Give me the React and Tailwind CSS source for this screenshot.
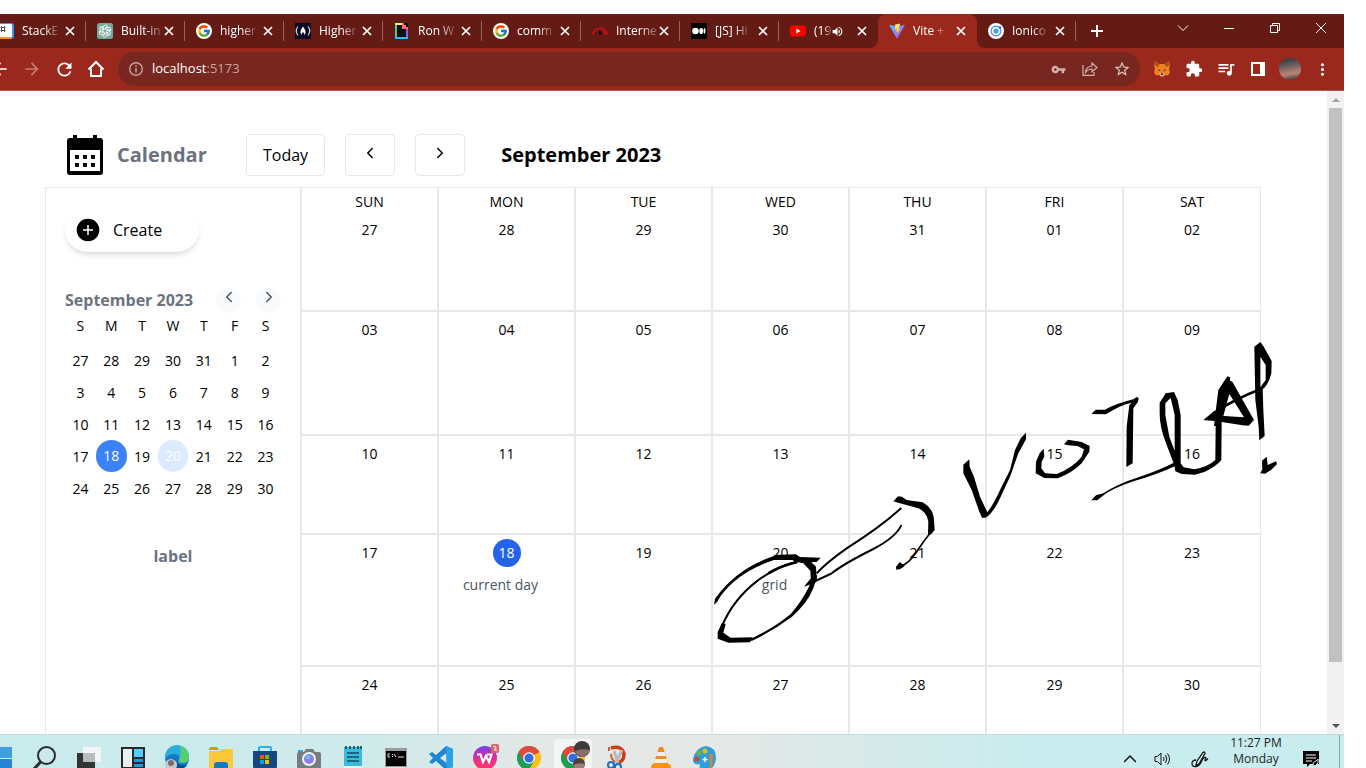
import React from "react";
import { FcGoogle } from "react-icons/fc";
import {
  MdArrowBack,
  MdArrowForward,
  MdRefresh,
  MdExtension,
  MdVpnKey,
  MdStarBorder,
  MdMoreVert,
  MdQueueMusic,
  MdVolumeUp,
} from "react-icons/md";
import { ChevronLeft, ChevronRight } from "lucide-react";

/* ---------- favicons ---------- */

const StackEditIcon = () => (
  <svg width="16" height="16" viewBox="0 0 16 16">
    <rect width="16" height="16" rx="3" fill="#2f9bef" />
    <path d="M0 13h14l-1 3H3q-3 0-3-3z" fill="#f7941d" />
    <rect x="0" y="1" width="14" height="13" rx="1" fill="#fff" />
    <path d="M3.500 3v6M6.500 3v6M2.500 4.500h5M2.500 7.500h5" stroke="#555" />
  </svg>
);

const OpenAiIcon = () => (
  <svg width="16" height="16" viewBox="0 0 16 16">
    <rect width="16" height="16" rx="2.500" fill="#74aa9c" />
    <g fill="none" stroke="#fff" strokeWidth=".9">
      {[0, 60, 120, 180, 240, 300].map((a) => (
        <path key={a} transform={`rotate(${a} 8 8)`} d="M6.200 7V4.200a2.300 2.300 0 0 1 4.300-1L8 4.900v2" />
      ))}
    </g>
  </svg>
);

const GoogleIcon = () => (
  <span className="flex size-4 items-center justify-center rounded-full bg-white">
    <FcGoogle size={14} />
  </span>
);

const CampIcon = () => (
  <svg width="16" height="16" viewBox="0 0 16 16">
    <rect width="16" height="16" fill="#0a0a23" />
    <path d="M3 3.500Q-.5 8 3 12.500M13 3.500Q16.500 8 13 12.500" fill="none" stroke="#d8d8e0" strokeWidth="1.200" />
    <path d="M8 3.500q3 4 2.500 6.500l-1.500 2q.5-2-1-3-1.500 1-1 3L5.500 10Q5 7 8 3.500z" fill="#fff" />
  </svg>
);

const GiphyIcon = () => (
  <svg width="16" height="16" viewBox="0 0 16 16">
    <rect x="1" width="13" height="16" fill="#111" />
    <path d="M1 0h2v14H1z" fill="#4fc98a" />
    <path d="M1 0h7v2H1z" fill="#fff68f" />
    <path d="M1 14h13v2H1z" fill="#1fc3ff" />
    <path d="M12 6h2v8h-2z" fill="#8b5cf6" />
    <path d="M8 0h2v2h2v2h2v2H8z" fill="#ff6f6f" />
  </svg>
);

const GaugeIcon = () => (
  <svg width="16" height="16" viewBox="0 0 16 16" fill="none">
    <path d="M.8 11.500a7.300 7.300 0 0 1 14.400 0" stroke="#d0151c" strokeWidth="1.500" />
    <path d="M8 4.500a7 7 0 0 1 5 7" stroke="#c01016" strokeWidth="2" />
    <path d="M7 12l.5-5.500L10 11z" fill="#180506" />
  </svg>
);

const MediumIcon = () => (
  <svg width="16" height="16" viewBox="0 0 16 16">
    <rect width="16" height="16" rx="1" fill="#000" />
    <circle cx="4.500" cy="8" r="3.300" fill="#fff" />
    <ellipse cx="10.200" cy="8" rx="1.900" ry="3.100" fill="#fff" />
    <ellipse cx="13.500" cy="8" rx="1" ry="2.900" fill="#fff" />
  </svg>
);

const YouTubeIcon = () => (
  <svg width="16" height="16" viewBox="0 0 16 16">
    <rect y="2.500" width="16" height="11" rx="3" fill="#f00" />
    <path d="M6.300 5.600v4.800L10.600 8z" fill="#fff" />
  </svg>
);

const ViteIcon = () => (
  <svg width="16" height="16" viewBox="0 0 32 32">
    <defs>
      <linearGradient id="viteA" x1="0" y1="0" x2="1" y2="1">
        <stop stopColor="#41d1ff" />
        <stop offset="1" stopColor="#bd34fe" />
      </linearGradient>
      <linearGradient id="viteB" x1="0" y1="0" x2="0" y2="1">
        <stop stopColor="#ffea83" />
        <stop offset="1" stopColor="#ffa800" />
      </linearGradient>
    </defs>
    <path d="M31 5.500 17 30.600q-.8 1.200-1.700 0L1 5.500Q.6 4 2.200 4.200L16 6.700l13.800-2.500q1.700-.1 1.200 1.300z" fill="url(#viteA)" />
    <path d="M22.500 1 12.200 3l-.7 10.700 3.600-.7-1 5.300 3-.9-1.200 7.200 7.200-13.800-3.800.7z" fill="url(#viteB)" />
  </svg>
);

const IonicIcon = () => (
  <svg width="16" height="16" viewBox="0 0 16 16">
    <circle cx="8" cy="8" r="8" fill="#fff" />
    <circle cx="8" cy="8" r="4.900" fill="none" stroke="#3880ff" strokeWidth="1.100" />
    <circle cx="8" cy="8" r="2.600" fill="#3fa0f5" />
    <circle cx="12" cy="4.500" r="1.200" fill="#1f5fe0" />
  </svg>
);

/* ---------- browser chrome ---------- */

const leftTabs = [
  { title: "Built-in", Icon: OpenAiIcon },
  { title: "higher", Icon: GoogleIcon },
  { title: "Higher", Icon: CampIcon },
  { title: "Ron W", Icon: GiphyIcon },
  { title: "comm", Icon: GoogleIcon },
  { title: "Interne", Icon: GaugeIcon },
  { title: "[JS] Hi", Icon: MediumIcon },
  { title: "(19", Icon: YouTubeIcon, audio: true },
];

function CloseGlyph() {
  return (
    <svg width="10" height="10" viewBox="0 0 10 10">
      <path d="M1 1l8 8M9 1L1 9" stroke="#fff" strokeWidth="1.700" />
    </svg>
  );
}

function Tab({ title, Icon, audio, separator = true }) {
  return (
    <div className="flex h-[34px] w-[99px] shrink-0 items-center pl-[11px] text-white">
      <span className="shrink-0">
        <Icon />
      </span>
      <button type="button" className="ml-2 min-w-0 flex-1 text-left text-xs whitespace-nowrap">
        <span className="inline-block [mask-image:linear-gradient(to_right,#000_60%,transparent_110%)]">{title}</span>
      </button>
      {audio && <MdVolumeUp size={13} className="mr-[10px] shrink-0" />}
      <button type="button" aria-label="Close tab" className="flex size-4 shrink-0 items-center justify-center">
        <CloseGlyph />
      </button>
      <span className={separator ? "ml-[7px] h-5 w-px shrink-0 bg-[#9a605b]" : "ml-[7px] w-px shrink-0"} />
    </div>
  );
}

function WindowButton({ label, children }) {
  return (
    <button type="button" aria-label={label} className="flex h-7 w-[46px] items-center justify-center">
      <svg width="12" height="12" viewBox="0 0 12 12" fill="none" stroke="#fff">
        {children}
      </svg>
    </button>
  );
}

function TabStrip() {
  return (
    <div className="flex h-[34px] bg-[#9b281d]">
      <div className="flex shrink-0 rounded-br-lg bg-[#631b14]">
        <div className="flex w-[86px] justify-end overflow-hidden">
          <Tab title="StackE" Icon={StackEditIcon} />
        </div>
        {leftTabs.map((t, i) => (
          <Tab key={t.title} {...t} separator={i < leftTabs.length - 1} />
        ))}
      </div>
      <div className="shrink-0 bg-[#631b14]">
        <div className="rounded-t-lg bg-[#9b281d]">
          <Tab title="Vite +" Icon={ViteIcon} separator={false} />
        </div>
      </div>
      <div className="flex flex-1 rounded-bl-lg bg-[#631b14]">
        <Tab title="Ionico" Icon={IonicIcon} />
        <button type="button" aria-label="New tab" className="ml-[9px] flex w-6 items-center justify-center">
          <svg width="12" height="12" viewBox="0 0 12 12">
            <path d="M6 0v12M0 6h12" stroke="#fff" strokeWidth="2" />
          </svg>
        </button>
        <div className="ml-auto flex">
          <WindowButton label="Search tabs">
            <path d="M1 3.500l5 5 5-5" />
          </WindowButton>
          <WindowButton label="Minimize">
            <path d="M1 6.500h10" />
          </WindowButton>
          <WindowButton label="Restore">
            <path d="M1.500 3.500h7v7h-7zM3.500 3V1.500h7v7H9" />
          </WindowButton>
          <WindowButton label="Close">
            <path d="M1 1l10 10M11 1L1 11" />
          </WindowButton>
        </div>
      </div>
    </div>
  );
}

function ToolButton({ label, children }) {
  return (
    <button type="button" aria-label={label} className="flex h-8 w-8 shrink-0 items-center justify-center">
      {children}
    </button>
  );
}

function Toolbar() {
  return (
    <div className="flex h-[43px] items-center border-b border-[#b5554c] bg-[#9b281d] pr-[6px] text-white">
      <div className="flex w-4 justify-end overflow-hidden">
        <ToolButton label="Back">
          <MdArrowBack size={20} className="shrink-0" />
        </ToolButton>
      </div>
      <ToolButton label="Forward">
        <MdArrowForward size={20} className="text-[#c67b74]" />
      </ToolButton>
      <ToolButton label="Reload">
        <MdRefresh size={21} />
      </ToolButton>
      <ToolButton label="Home">
        <svg width="18" height="18" viewBox="0 0 18 18" fill="none">
          <path d="M1.500 9.500L9 2l7.500 7.500M4 8.500V16h10V8.500" stroke="#fff" strokeWidth="2" />
        </svg>
      </ToolButton>
      <div className="mx-[6px] flex h-[34px] min-w-0 flex-1 items-center rounded-full bg-[#77271f] pr-[2px] pl-[10px]">
        <svg width="16" height="16" viewBox="0 0 16 16" fill="none">
          <circle cx="8" cy="8" r="6.300" stroke="#c5a5a2" strokeWidth="1.400" />
          <path d="M8 7v4.500M8 4.300v1.500" stroke="#c5a5a2" strokeWidth="1.500" />
        </svg>
        <button type="button" aria-label="Address" className="ml-2 flex-1 text-left text-[13px]">
          localhost<span className="text-[#c5a29f]">:5173</span>
        </button>
        <ToolButton label="Passwords">
          <MdVpnKey size={15} className="text-[#d0b2af]" />
        </ToolButton>
        <ToolButton label="Share">
          <svg width="16" height="16" viewBox="0 0 16 16" fill="none" stroke="#d0b2af" strokeWidth="1.200">
            <path d="M1 4v10.400h11V11" />
            <path d="M3.500 11.500Q4 5.500 10 5V2l5 4.500-5 4.200V8Q6 8 3.500 11.500z" />
          </svg>
        </ToolButton>
        <ToolButton label="Bookmark">
          <MdStarBorder size={18} className="text-[#dcc4c2]" />
        </ToolButton>
      </div>
      <ToolButton label="Wallet">
        <svg width="16" height="16" viewBox="0 0 16 16">
          <path d="M1 0l4.500 3h5L15 0l1 4-1 4 1 3.500-2 3-3-.5-1.500 1.500h-3L5 14l-3 .5-2-3L1 8 0 4z" fill="#f0811f" />
          <path d="M1 0l4.500 3L4 6 0 4zM15 0l-4.500 3L12 6l4-2z" fill="#a3541a" />
          <path d="M4 8l3 1.500-2 .8zM12 8L9 9.500l2 .8z" fill="#3a3f46" />
          <path d="M5 12.500h6L9.500 15h-3z" fill="#d5bfb2" />
          <path d="M6.800 12.500h2.400l-.4 1.500H7.200z" fill="#161616" />
        </svg>
      </ToolButton>
      <ToolButton label="Extensions">
        <MdExtension size={18} />
      </ToolButton>
      <ToolButton label="Media">
        <MdQueueMusic size={20} />
      </ToolButton>
      <ToolButton label="Side panel">
        <svg width="14" height="14" viewBox="0 0 14 14">
          <path fillRule="evenodd" d="M0 0h14v14H0zM2 2v10h7V2z" fill="#fff" />
        </svg>
      </ToolButton>
      <ToolButton label="Profile">
        <span className="size-[22px] rounded-full bg-[linear-gradient(170deg,#3a3d42_10%,#6b5f60_38%,#a3786d_58%,#b98476_70%,#54403e_92%)]" />
      </ToolButton>
      <ToolButton label="Menu">
        <MdMoreVert size={19} />
      </ToolButton>
    </div>
  );
}

/* ---------- calendar page ---------- */

function CalendarLogo() {
  return (
    <svg width="40" height="40" viewBox="0 0 40 40">
      <path d="M8 0h4v3h16V0h4v3h3q3 0 3 3v31q0 3-3 3H5q-3 0-3-3V6q0-3 3-3h3z" />
      <path d="M5 15h30v21H5z" fill="#fff" />
      <path d="M10 20h4v4h-4zM18 20h4v4h-4zM26 20h4v4h-4zM10 28h4v4h-4zM18 28h4v4h-4zM26 28h4v4h-4z" />
    </svg>
  );
}

function PageHeader() {
  return (
    <header className="flex h-24 items-center gap-5 pt-8 pl-5">
      <div className="flex w-[161px] items-center gap-3">
        <CalendarLogo />
        <h1 className="text-xl font-bold text-[#6b7280]">Calendar</h1>
      </div>
      <button type="button" className="h-[42px] rounded border border-gray-200 px-4 text-base">
        Today
      </button>
      <button
        type="button"
        aria-label="Previous month"
        className="flex h-[42px] w-[50px] items-center justify-center rounded border border-gray-200 pb-1"
      >
        <ChevronLeft size={18} />
      </button>
      <button
        type="button"
        aria-label="Next month"
        className="flex h-[42px] w-[50px] items-center justify-center rounded border border-gray-200 pb-1"
      >
        <ChevronRight size={18} />
      </button>
      <h2 className="ml-4 text-xl font-bold">September 2023</h2>
    </header>
  );
}

const miniWeeks = [
  [27, 28, 29, 30, 31, 1, 2],
  [3, 4, 5, 6, 7, 8, 9],
  [10, 11, 12, 13, 14, 15, 16],
  [17, 18, 19, 20, 21, 22, 23],
  [24, 25, 26, 27, 28, 29, 30],
];

function MiniDay({ week, day }) {
  if (week === 3 && day === 18) {
    return <button type="button" className="block h-8 w-full rounded-full bg-[#3b82f6] text-white">{day}</button>;
  }
  if (week === 3 && day === 20) {
    return <button type="button" className="block h-8 w-full rounded-full bg-[#dbeafe] text-white">{day}</button>;
  }
  return <button type="button" className="block h-8 w-full pt-[2px]">{day}</button>;
}

function Sidebar() {
  return (
    <aside className="w-64 shrink-0 border-x border-gray-200 px-[19px] pt-5">
      <button type="button" className="flex h-11 w-[134px] items-center gap-3 rounded-full pl-[10px] text-base shadow-md">
        <svg width="26" height="26" viewBox="0 0 26 26">
          <circle cx="13" cy="13" r="11.300" />
          <path d="M13 8v10M8 13h10" stroke="#fff" strokeWidth="1.500" />
        </svg>
        Create
      </button>
      <div className="mt-9 flex h-6 items-center">
        <h3 className="text-base font-bold text-[#6b7280]">September 2023</h3>
        <button
          type="button"
          aria-label="Previous"
          className="ml-auto flex size-[25px] items-center justify-center rounded-full bg-gray-50 pb-[6px] text-gray-600"
        >
          <ChevronLeft size={18} />
        </button>
        <button
          type="button"
          aria-label="Next"
          className="ml-[15px] flex size-[25px] items-center justify-center rounded-full bg-gray-50 pb-[6px] text-gray-600"
        >
          <ChevronRight size={18} />
        </button>
      </div>
      <table className="w-full table-fixed border-collapse text-center text-sm">
        <thead>
          <tr className="h-8 align-top">
            {["S", "M", "T", "W", "T", "F", "S"].map((d, i) => (
              <th key={i} className="pt-1 font-normal">{d}</th>
            ))}
          </tr>
        </thead>
        <tbody>
          {miniWeeks.map((w, wi) => (
            <tr key={wi}>
              {w.map((d) => (
                <td key={d} className="p-0">
                  <MiniDay week={wi} day={d} />
                </td>
              ))}
            </tr>
          ))}
        </tbody>
      </table>
      <p className="mt-10 text-center text-base font-bold text-[#6b7280]">label</p>
    </aside>
  );
}

const monthWeeks = [
  { height: "h-[98px]", days: ["27", "28", "29", "30", "31", "01", "02"] },
  { height: "h-[124px]", days: ["03", "04", "05", "06", "07", "08", "09"] },
  { height: "h-[99px]", days: ["10", "11", "12", "13", "14", "15", "16"] },
  { height: "h-[132px]", days: ["17", "18", "19", "20", "21", "22", "23"] },
  { height: "h-[124px]", days: ["24", "25", "26", "27", "28", "29", "30"] },
];

const events = { "3-18": "current day", "3-20": "grid" };

function MonthGrid() {
  return (
    <table className="w-full table-fixed border-separate border-spacing-0 border-l border-gray-200 text-center text-sm">
      <thead>
        <tr>
          {["SUN", "MON", "TUE", "WED", "THU", "FRI", "SAT"].map((d) => (
            <th key={d} className="border-r-2 border-gray-200 p-0 pt-1 font-normal last:border-r">{d}</th>
          ))}
        </tr>
      </thead>
      <tbody>
        {monthWeeks.map((w, wi) => (
          <tr key={wi} className={`${w.height} align-top`}>
            {w.days.map((d) => (
              <td
                key={d}
                className={
                  wi > 0
                    ? "border-t-2 border-r-2 border-gray-200 p-0 pt-1 last:border-r"
                    : "border-r-2 border-gray-200 p-0 pt-1 last:border-r"
                }
              >
                {wi === 3 && d === "18" ? (
                  <span className="mx-auto flex size-7 items-center justify-center rounded-full bg-[#2563eb] text-white">
                    {d}
                  </span>
                ) : (
                  <span className="flex h-7 items-center justify-center">{d}</span>
                )}
                {events[`${wi}-${d}`] && (
                  <p className="mt-2 mr-3 text-gray-600">{events[`${wi}-${d}`]}</p>
                )}
              </td>
            ))}
          </tr>
        ))}
      </tbody>
    </table>
  );
}

/* Freehand ink annotation over the calendar */
function Ink() {
  return (
    <svg
      className="pointer-events-none absolute top-[239px] left-[700px]"
      width="600"
      height="330"
      viewBox="0 0 1800 990"
      fill="#000"
      stroke="none"
    >
      <path d="M42 824L45 806Q110 715 222 678V690Q115 725 62 798L52 815z" />
      <path d="M222 675L287 673L300 681L362 683L350 696L306 697L275 690H222z" />
      <path d="M285 680L325 688L348 710L350 745L340 775Q322 820 276 860Q215 905 155 933L150 928Q225 892 272 852Q305 815 326 772L333 755L331 722L310 700L280 694z" />
      <path d="M150 937L85 938L53 926V906L66 878L77 882L70 908L92 923L158 922z" />
      <path d="M66 888Q100 808 170 754Q225 712 290 695" fill="none" stroke="#000" strokeWidth="6" />
      <path d="M205 730Q240 708 292 696" fill="none" stroke="#000" strokeWidth="8" />
      <path d="M312 770L335 742L352 735L348 757z" />
      <g fill="none" stroke="#000" strokeWidth="6">
        <path d="M350 730Q380 697 440 655Q540 592 604 534" />
        <path d="M346 753L395 730Q430 702 520 657Q590 620 604 585" />
        <path d="M690 610Q668 638 650 665Q625 703 600 709" strokeWidth="5" />
      </g>
      <path d="M580 514L594 499L606 500L620 510L668 517Q700 535 702 570L704 600L692 614L684 612L685 575Q680 545 655 535L600 520z" />
      <path d="M588 710L600 696L614 708L600 718L589 719z" />
      <path d="M790 404L808 388L809 410L822 440L840 500L865 553L858 563H846L838 545L815 480L790 430z" />
      <path d="M962 325L978 308V328L955 370L930 440L900 505Q885 540 862 560L858 552Q880 525 900 480L930 420L945 360z" />
      <g transform="translate(900 0)">
        <path d="M131 356L119 370L108 395L107 430L133 444L173 445Q215 430 245 400L268 365L269 348L245 336L204 329L192 343L205 346L232 348L252 358L245 380Q220 412 170 432L135 430L124 415L125 395L133 380z" />
        <path d="M274 252L287 239H315Q350 220 400 208L410 201L416 204L414 215L400 235L398 400L379 411L380 290L388 225L395 218Q360 225 318 253z" />
        <path
          fillRule="evenodd"
          d="M497 190L522 186L533 210L542 255V400L551 412L583 418Q625 410 646 390L647 288H642L650 220L655 180L682 139L690 142V152L697 155L762 270L746 287L728 286L665 276L664 390Q650 408 615 425L585 434L545 432L526 424L523 405L500 345Q478 290 479 250V218zM496 220L512 203L524 255V362L508 320L496 255zM670 258L688 192L732 262z"
        />
        <path d="M610 270L642 244L660 258L745 266V281L665 275z" />
        <path d="M640 250Q700 208 785 176" fill="none" stroke="#000" strokeWidth="8" />
        <path
          fillRule="evenodd"
          d="M763 50L781 36L790 48L815 93L814 130Q805 165 788 178L790 240L794 318L778 331L776 290L766 210zM781 80L797 105V150L781 172z"
        />
        <path d="M526 408Q470 434 400 454Q330 478 305 500L292 511H274L288 496L310 490Q350 462 420 440Q480 420 526 396z" />
        <path d="M786 392L800 380L803 405L828 394L831 402L813 420L795 431L781 430L787 418z" />
      </g>
    </svg>
  );
}

function Scrollbar() {
  return (
    <div className="flex w-[17px] shrink-0 flex-col bg-[#f1f1f1]">
      <button type="button" aria-label="Scroll up" className="flex h-[17px] items-center justify-center">
        <svg width="8" height="4" viewBox="0 0 8 4"><path d="M0 4l4-4 4 4z" fill="#a3a3a3" /></svg>
      </button>
      <div className="min-h-0 flex-1 px-[2px]">
        <div className="h-[91%] bg-[#c1c1c1]" />
      </div>
      <button type="button" aria-label="Scroll down" className="flex h-[17px] items-center justify-center">
        <svg width="8" height="4" viewBox="0 0 8 4"><path d="M0 0l4 4 4-4z" fill="#505050" /></svg>
      </button>
    </div>
  );
}

/* ---------- taskbar ---------- */

const ChromeLogo = () => (
  <>
    <circle cx="12" cy="12" r="12" fill="#fbc116" />
    <path d="M12 12L1.600 6A12 12 0 0 1 22.400 6z" fill="#dd4b3e" />
    <path d="M12 12L1.600 6A12 12 0 0 0 12 24l5-9z" fill="#1e9d57" />
    <path d="M12 6h10.400A12 12 0 0 0 1.600 6L7 15z" fill="#dd4b3e" />
    <circle cx="12" cy="12" r="5.800" fill="#fff" />
    <circle cx="12" cy="12" r="4.600" fill="#2f6fe4" />
  </>
);

const taskIcons = [
  ["Search", <g fill="none" stroke="#2a2a2a" strokeWidth="2"><circle cx="13.500" cy="9.500" r="8.500" /><path d="M7.500 16L1 23" strokeWidth="3" /></g>],
  ["Task view", <g><path d="M0 7h18v15H0z" fill="#333" /><path d="M6 1h18v15H6z" fill="#f6f6f6" opacity=".9" /><path d="M6 7h12v9H6z" fill="#b9bcbc" /></g>],
  ["Widgets", <g><path d="M0 1h24v22H0z" fill="#27292b" /><path d="M2 3h9v18H2z" fill="#eceef0" /><path d="M13 3h9v8h-9z" fill="#55cdfb" /><path d="M13 13h9v3h-9zM13 18h9v3h-9z" fill="#2596dc" /></g>],
  ["Edge", <g><circle cx="12" cy="12" r="12" fill="#1379cf" /><path d="M0 11A12 12 0 0 1 24 11q0 6-7 6-4 0-3-3 2-6-5-6Q3 8 0 13z" fill="#2aaede" /><path d="M14 0q10 2 10 11 0 6-7 6-4 0-3-3 4-8 0-14z" fill="#63d25c" opacity=".85" /><path d="M9 12q3 9 13 7-4 5-10 5-5-4-3-12z" fill="#0c4c93" /><circle cx="6" cy="19" r="6" fill="#c9c9cb" /><circle cx="6" cy="17" r="3" fill="#7a6b68" /></g>],
  ["Explorer", <g><path d="M0 3q0-2 2-2h6l2 3H0z" fill="#d9960d" /><path d="M0 5h10l2-2h12v20H0z" fill="#fdc93a" /><path d="M5 23v-4q0-3 3-3h8q3 0 3 3v4z" fill="#1676c8" /></g>],
  ["Store", <g><path d="M6 6V2q0-1 1-1h10q1 0 1 1v4" fill="none" stroke="#27b4ee" strokeWidth="2" /><path d="M0 5h24v15q0 3-3 3H3q-3 0-3-3z" fill="#16477e" /><path d="M7 9h4v4H7z" fill="#f25022" /><path d="M12 9h4v4h-4z" fill="#7fba00" /><path d="M7 14h4v4H7z" fill="#00a4ef" /><path d="M12 14h4v4h-4z" fill="#ffb900" /></g>],
  ["Camera", <g><path d="M1 4h5v3H1z" fill="#23a8e0" /><path d="M0 8q0-2 2-2h5l2-3h7l2 3h4q2 0 2 2v13q0 2-2 2H2q-2 0-2-2z" fill="#777c82" /><circle cx="12" cy="13" r="7" fill="#f3f3f6" /><circle cx="12" cy="13" r="5" fill="#8f7be4" /><circle cx="11" cy="11" r="2.500" fill="#63bdf2" /></g>],
  ["Notepad", <g><path d="M3 1h18v20H3z" fill="#38bcd9" /><path d="M3 20h18v3H3z" fill="#eceff0" /><path d="M5 0v3M9 0v3M13 0v3M17 0v3M20 0v3M6 7h12M6 11h12M6 15h12" stroke="#0c4c63" strokeWidth="1.700" /></g>],
  ["Terminal", <g><path d="M0 2h22v19H0z" fill="#9b9b9b" /><path d="M1 5h20v15H1z" fill="#050505" /><path d="M5 8H3v3h2M7.500 8v1M7.500 10v1M9 8l2 3M13 11h6" fill="none" stroke="#ddd" /></g>],
  ["VS Code", <g fillRule="evenodd"><path d="M17 0L7 9 3 6 0 8l4 4-4 4 3 2 4-3 10 9 7-3V3zM17.500 7v10L11 12z" fill="#1f86cf" /><path d="M17.500 0L24 3v18l-6.500 3z" fill="#2aa2ea" /></g>],
  ["WPS", <g><defs><linearGradient id="wps" x1="0" y1="0" x2="0" y2="1"><stop stopColor="#7a3df0" /><stop offset=".6" stopColor="#e8308c" /><stop offset="1" stopColor="#fb3b58" /></linearGradient></defs><circle cx="12" cy="12" r="12" fill="url(#wps)" /><path d="M4 8.500h3.500l2.500 7.500 3-6 3 6 2.500-7.500H14" fill="none" stroke="#fff" strokeWidth="2.200" /><rect x="18" y="-2" width="8" height="9" rx="2" fill="#dd6464" /><path d="M20 1q3-2 3 1l-2 2h3" fill="none" stroke="#fff" /></g>],
  ["Chrome", <ChromeLogo />],
  ["Chrome profile", <g><ChromeLogo /><circle cx="21" cy="3" r="8" fill="#3d3a3d" /><path d="M14 5q7-3 15-1-2 7-8 7-5-1-7-6z" fill="#8a706b" /><circle cx="18" cy="18" r="6" fill="#4a4143" /><path d="M12 19q6-3 12-1-1 6-6 6-4 0-6-5z" fill="#a07d74" /></g>],
  ["Snip", <g fill="none"><path d="M6 2q11-3 13 6 0 7-6 9" stroke="#cf3b13" strokeWidth="3.500" /><path d="M4 1v4M6 8q0 5 4 8" stroke="#d4583a" strokeWidth="2" /><path d="M9 5l4 12M17 4l-6 13" stroke="#b4babe" strokeWidth="3" /><circle cx="6" cy="19" r="3" stroke="#1672bf" strokeWidth="2" /><circle cx="13" cy="21" r="3" stroke="#1672bf" strokeWidth="2" /></g>],
  ["VLC", <g><path d="M10 1h4l6 19H4z" fill="#f08a1d" /><path d="M8.500 6h7l1.300 4H7.200zM6.200 13h11.600l1 4H5z" fill="#eef0ef" /><path d="M3 18h18l2 6H1z" fill="#f8960c" /></g>],
  ["Paint", <g><path d="M13 0q10 1 10 12-1 12-11 12-7 0-5-6-7 2-7-5Q2 2 13 0z" fill="#2b9fdd" /><circle cx="12" cy="5" r="2.500" fill="#f2b50e" /><circle cx="6" cy="7" r="2.500" fill="#6db33f" /><circle cx="4" cy="13" r="2.500" fill="#d1481f" /><path d="M16 8h4l-1 16h-2z" fill="#c98a3c" /><path d="M12 11v5M9.500 13.500h5" stroke="#fff" strokeWidth="1.500" /></g>],
];

function Taskbar() {
  return (
    <footer className="flex h-[34px] shrink-0 items-start overflow-hidden border-t border-[#bfdcde] bg-[linear-gradient(to_right,#c9ebed_0%,#d0eaeb_28%,#e5e8e5_42%,#e4e8e6_54%,#c9ecee_76%,#c9ecee_100%)]">
      <button type="button" aria-label="Start" className="mt-3 w-[23px] shrink-0">
        <svg width="12" height="24" viewBox="0 0 12 24">
          <path d="M0 0h12v11H0z" fill="#3f9fe3" />
          <path d="M0 12h12v11H0z" fill="#2684d6" />
        </svg>
      </button>
      {taskIcons.map(([label, art]) => (
        <button
          key={label}
          type="button"
          aria-label={label}
          className={
            label === "Chrome profile"
              ? "mx-[3px] mt-1 flex size-[38px] shrink-0 items-center justify-center rounded bg-[#f3f5f5]"
              : "mt-[1px] flex size-11 shrink-0 items-center justify-center"
          }
        >
          <svg width="24" height="24" viewBox="0 0 24 24" overflow="visible">
            {art}
          </svg>
        </button>
      ))}
      <div className="ml-auto flex h-12 shrink-0 items-center">
        <svg className="mr-[18px]" width="12" height="24" viewBox="0 0 12 24" fill="none" stroke="#111">
          <path d="M0 15l6-6 6 6" strokeWidth="1.500" />
        </svg>
        <svg className="mr-5" width="17" height="16" viewBox="0 0 17 16" fill="none" stroke="#111">
          <path d="M1 5.500h2.500L7 2v12l-3.500-3.500H1zM9.500 6q1 2 0 4M11.500 4q2.500 4 0 8M13.500 2.500q4 5.500 0 11" />
        </svg>
        <svg width="18" height="18" viewBox="0 0 18 18" fill="none" stroke="#111" strokeWidth="1.300">
          <path d="M6 11L12 2.500q2-1.500 2 1L8 14l-3 1zM5 10q-4 0-4 3.500Q1 17 5 16.500t6-6.500q3-4 4-2-2 3 0 2.500l2-2" />
        </svg>
        <div className="-mt-4 w-[94px] text-center text-xs leading-4 text-[#1c1c1c]">
          <p>11:27 PM</p>
          <p>Monday</p>
        </div>
        <svg className="mr-5" width="16" height="18" viewBox="0 0 16 18">
          <path d="M0 1h16v13h-9l-3 3v-3H0z" />
          <path d="M3 5h10M3 8h10M3 11h6" stroke="#fff" strokeWidth="1.200" />
          <path d="M10 15q-1-3 3-4l2-2v4l-3 3z" fill="#000" stroke="#c9ecee" />
        </svg>
        <span className="mr-1 h-full w-px bg-[#8fa5a7]" />
      </div>
    </footer>
  );
}

export default function App() {
  return (
    <div className="h-screen overflow-hidden bg-white pt-[14px] pr-[22px] font-['Open_Sans','Noto_Sans',sans-serif] text-black">
      <div className="flex h-full flex-col">
        <nav className="shrink-0" aria-label="Browser">
          <TabStrip />
          <Toolbar />
        </nav>
        <div className="flex min-h-0 flex-1">
          <main className="relative min-w-0 flex-1 overflow-hidden pr-[66px] pl-[45px]">
            <PageHeader />
            <div className="flex border-t border-gray-200">
              <Sidebar />
              <div className="min-w-0 flex-1">
                <MonthGrid />
              </div>
            </div>
            <Ink />
          </main>
          <Scrollbar />
        </div>
        <Taskbar />
      </div>
    </div>
  );
}
